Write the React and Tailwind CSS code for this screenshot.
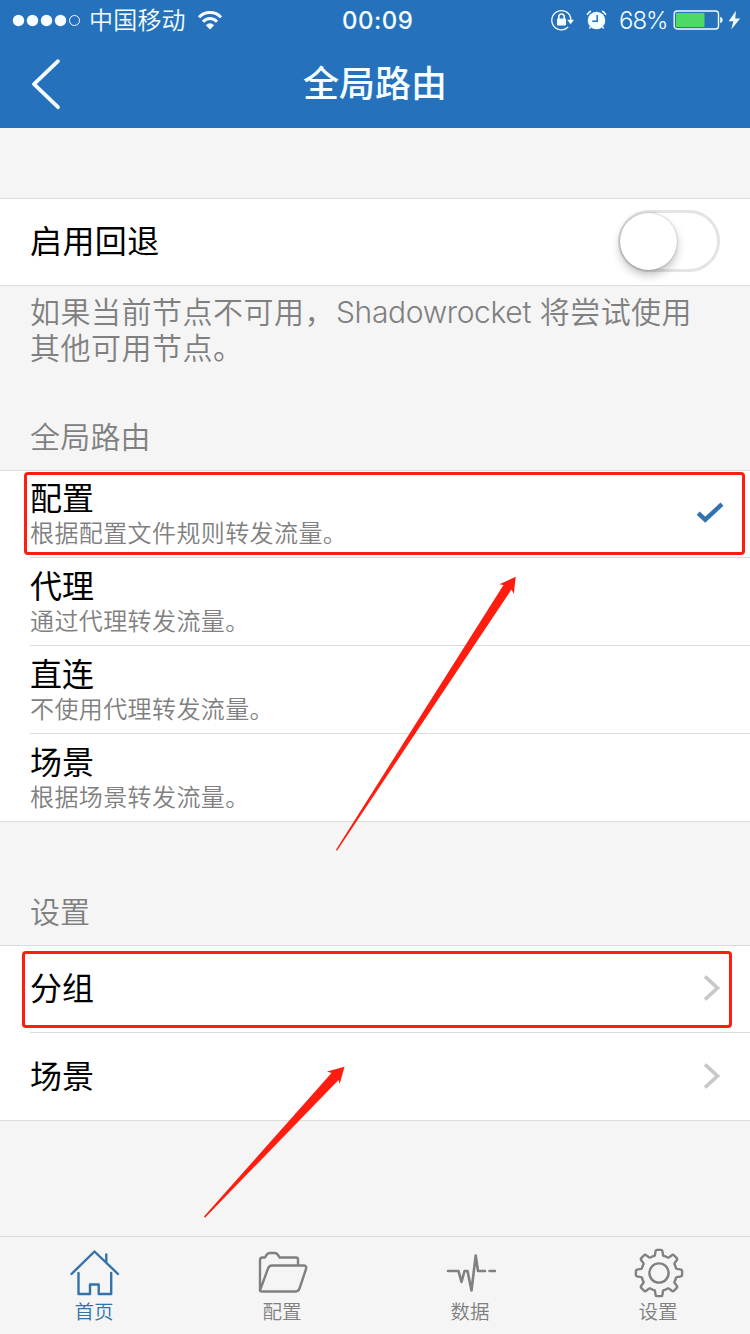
import React from "react";

const FONT = "font-['Inter','Noto_Sans_CJK_SC',sans-serif]";

function StatusBar() {
  return (
    <div className="flex h-10 items-center text-[#f4fdff]">
      <svg className="ml-3 h-5 w-[70px] shrink-0" viewBox="0 0 70 20" fill="currentColor">
        <circle cx="6.5" cy="10.5" r="5.7" />
        <circle cx="20.5" cy="10.5" r="5.7" />
        <circle cx="34.5" cy="10.5" r="5.7" />
        <circle cx="48.5" cy="10.5" r="5.7" />
        <circle cx="62.5" cy="10.5" r="5" fill="none" stroke="currentColor" strokeWidth="1" />
      </svg>
      <span className="ml-[7px] w-[108px] whitespace-nowrap pt-0.5 text-2xl font-[350] leading-10 tracking-[0.2px]">中国移动</span>
      <svg className="ml-px h-[19px] w-6 shrink-0" viewBox="0 0 24 19" fill="none" stroke="currentColor" strokeWidth="3">
        <path d="M1 6.3C7-.2 17-.2 23 6.3" />
        <path d="M5 10.7c4-4.2 10-4.2 14 0" />
        <path d="M7.8 14.2Q12 10.4 16.2 14.2L12 18.6Z" fill="currentColor" stroke="none" />
      </svg>
      <span className="ml-[120px] w-[74px] whitespace-nowrap pt-0.5 text-2xl font-medium leading-10 tracking-[0.5px]">00:09</span>
      <svg className="ml-[134px] h-6 w-6 shrink-0" viewBox="0 0 24 24" fill="none" stroke="currentColor" strokeWidth="1.3">
        <path d="M20.6 9.5A9.6 9.6 0 1 0 18.2 19" />
        <path d="M20.8 12.2V11.5L20.4 8.6" />
        <path d="M17.2 11.8h6.8l-3.4 4.4Z" fill="currentColor" stroke="none" />
        <rect x="7" y="10.6" width="9" height="7" rx="0.8" fill="currentColor" stroke="none" />
        <path d="M8.8 11V8.7a2.7 2.7 0 0 1 5.4 0V11" strokeWidth="1.6" />
      </svg>
      <svg className="ml-3 h-6 w-6 shrink-0" viewBox="0 0 24 24" fill="none" stroke="currentColor">
        <circle cx="10.5" cy="12.5" r="8.8" fill="currentColor" stroke="none" />
        <path d="M1 6.8A12 12 0 0 1 4.9 3M16.1 3a12 12 0 0 1 3.9 3.8" strokeWidth="1.5" />
        <path d="M4.5 19l-1.2 1.5M16.5 19l1.2 1.5" strokeWidth="1.5" />
        <path d="M11.2 7v6.2H6.2" stroke="#2671bc" strokeWidth="1.5" />
      </svg>
      <span className="ml-[9px] w-[54px] whitespace-nowrap pt-0.5 text-2xl font-[350] leading-10 tracking-[-1px]">68%</span>
      <svg className="h-5 w-[68px] shrink-0" viewBox="0 0 68 20" fill="none">
        <rect x="1.2" y="1" width="44.3" height="18" rx="3" stroke="#f4fdff" strokeWidth="1.4" />
        <path d="M3.5 3H31.5v14H3.5Q3 17 3 16.5v-13Q3 3 3.5 3Z" fill="#4cd964" />
        <path d="M47.2 6.7q2.5 1 2.5 3.3t-2.5 3.3Z" fill="#f4fdff" />
        <path d="M63 .8 55.7 11.3h4.7L58.200 19.6l9-11.200h-5Z" fill="#f4fdff" />
      </svg>
    </div>
  );
}

function NavBar() {
  return (
    <header className="h-32 bg-[#2671bc]">
      <StatusBar />
      <div className="grid h-[88px] grid-cols-[200px_1fr_200px] items-center">
        <svg className="ml-7 h-[56px] w-9" viewBox="0 0 36 56" fill="none" stroke="#f4fdff" strokeWidth="3.8" strokeLinecap="round" strokeLinejoin="round">
          <path d="M30 5.2 6 28.2l24 23" />
        </svg>
        <h1 className="text-center text-4xl font-medium leading-[88px] text-[#f4fdff]">全局路由</h1>
      </div>
    </header>
  );
}

function RouteRow({ title, detail, checked, last }) {
  return (
    <div className={last ? "flex h-[87px] items-center" : "flex h-[88px] items-center"}>
      <div className={last ? "ml-[30px] h-full flex-1" : "ml-[30px] h-full flex-1 border-b border-[#dcdcdc]"}>
        <div className="flex h-full items-center justify-between pr-[26px]">
          <div className="pt-[3px]">
            <div className="text-[32px] leading-9 text-black">{title}</div>
            <div className="h-8 pt-px text-2xl font-[350] leading-8 tracking-[0.4px] text-[#808080]">{detail}</div>
          </div>
          {checked && (
            <svg className="mb-0.5 h-6 w-[28px]" viewBox="0 0 28 24" fill="none" stroke="#3472ad" strokeWidth="4.4">
              <path d="M2.2 12.2 9.2 18.7 26 3.2" />
            </svg>
          )}
        </div>
      </div>
    </div>
  );
}

function LinkRow({ title, last }) {
  return (
    <div className="h-[87px] pl-[30px]">
      <div className={last ? "flex h-full items-center justify-between pr-7" : "flex h-full items-center justify-between border-b border-[#dcdcdc] pr-7"}>
        <span className="text-[32px] leading-[86px] text-black">{title}</span>
        <svg className="mb-0.5 h-7 w-5" viewBox="0 0 20 28" fill="none" stroke="#c7c7cb" strokeWidth="3.6">
          <path d="M3 2.5 15.5 14 3 25.5" />
        </svg>
      </div>
    </div>
  );
}

const gearPoint = (deg, r) => {
  const a = (deg * Math.PI) / 180;
  return `${(25 + r * Math.sin(a)).toFixed(2)} ${(25 - r * Math.cos(a)).toFixed(2)}`;
};

const GEAR_PATH =
  Array.from({ length: 8 }, (_, i) => {
    const c = i * 45;
    return `${i ? "L" : "M"}${gearPoint(c - 19, 17.8)}Q${gearPoint(c - 13, 17.2)} ${gearPoint(c - 11.5, 19.5)}L${gearPoint(c - 9.5, 21.6)}Q${gearPoint(c - 8.5, 23.2)} ${gearPoint(c - 5, 23.2)}L${gearPoint(c + 5, 23.2)}Q${gearPoint(c + 8.5, 23.2)} ${gearPoint(c + 9.5, 21.6)}L${gearPoint(c + 11.5, 19.5)}Q${gearPoint(c + 13, 17.2)} ${gearPoint(c + 19, 17.8)}`;
  }).join("") + "Z";

function HomeIcon() {
  return (
    <path d="M1.5 26 24.5 3.5l23.5 22.5M36.3 6.5v8M8.5 25v21H20V36.5h8.7V46h12.5V25" />
  );
}

function FolderIcon() {
  return (
    <path d="M2 42.500V12q0-2 2-2.500H7q2-4.500 5-4.500H16.500q3 0 5 4.500H38q2 0 2 2V17.500M2 42.500 10 20.500q1-3 4-3H45.500q3.500 0 2.500 3.500L41.500 40.500q-1 3-4.500 3H4.500Q2 43.500 2 42.500" />
  );
}

function PulseIcon() {
  return (
    <path d="M2 23H12.500L15.500 34 18.500 23H21.500L25.500 42.500 29.700 7.500 32 23H39M43.500 23H49" strokeWidth="2.6" />
  );
}

function GearIcon() {
  return (
    <>
      <path d={GEAR_PATH} />
      <circle cx="25" cy="25" r="9.6" />
    </>
  );
}

function Tab({ label, active, children }) {
  return (
    <div className={active ? "flex w-[188px] shrink-0 flex-col items-center text-[#3472a8]" : "flex w-[188px] shrink-0 flex-col items-center text-[#808080]"}>
      <svg className="ml-px mt-[11px] h-[50px] w-[50px]" viewBox="0 0 50 50" fill="none" stroke="currentColor" strokeWidth="2.4" strokeLinecap="round" strokeLinejoin="round">
        {children}
      </svg>
      <span className="-mt-px h-[30px] text-[19.5px] font-[350] leading-[30px]">{label}</span>
    </div>
  );
}

function Annotations() {
  return (
    <>
      <div className="absolute left-6 top-[472px] h-[83px] w-[721px] rounded border-[3px] border-[#ff1d10]" />
      <div className="absolute left-[22px] top-[951px] h-[77px] w-[710px] rounded border-[3px] border-[#ff1d10]" />
      <svg className="absolute left-0 top-0 h-[1334px] w-[750px]" viewBox="0 0 750 1334" fill="#ff1d10">
        <path d="M336 849.7 503.5 585 499.3 584.3 515.7 576.8 513.8 594 511.5 589.5 337 850.8Z" />
        <path d="M204 1216.5 331.5 1073 327 1071.5 344.5 1066.7 339.7 1084 338.5 1080 205 1217.7Z" />
      </svg>
    </>
  );
}

export default function App() {
  return (
    <div className={`relative flex h-[1334px] w-[750px] flex-col overflow-hidden bg-[#f5f5f5] ${FONT}`}>
      <NavBar />
      <main className="flex-1 pt-[70px]">
        <section className="flex h-[88px] items-center justify-between border-y border-[#dcdcdc] bg-white px-[30px]">
          <span className="text-[32px] leading-[86px] tracking-[0.4px] text-black">启用回退</span>
          <div className="mb-0.5 flex h-[62px] w-[102px] items-center rounded-full border-[3px] border-[#e4e4e4] bg-white">
            <div className="-ml-px h-[57px] w-[57px] rounded-full bg-white shadow-[0_5px_10px_rgba(0,0,0,0.25),0_0_2px_rgba(0,0,0,0.3)]" />
          </div>
        </section>
        <p className="h-[130px] whitespace-nowrap pl-[30px] pt-2 text-[30px] font-[350] leading-9 tracking-[0.5px] text-[#808080]">
          如果当前节点不可用，<span className="ml-px tracking-[-0.35px]">Shadowrocket</span><span className="tracking-[0.4px]"> 将尝试使用</span>
          <br />
          其他可用节点。
        </p>
        <h2 className="h-[54px] pl-[30px] text-[30px] font-[350] leading-[42px] tracking-[0.2px] text-[#808080]">全局路由</h2>
        <section className="h-[352px] border-y border-[#dcdcdc] bg-white">
          <div className="-mt-px">
            <RouteRow title="配置" detail="根据配置文件规则转发流量。" checked />
            <RouteRow title="代理" detail="通过代理转发流量。" />
            <RouteRow title="直连" detail="不使用代理转发流量。" />
            <RouteRow title="场景" detail="根据场景转发流量。" last />
          </div>
        </section>
        <h2 className="h-[123px] pl-[30px] pt-[69px] text-[30px] font-[350] leading-[42px] text-[#808080]">设置</h2>
        <section className="h-[176px] border-y border-[#dcdcdc] bg-white">
          <LinkRow title="分组" />
          <LinkRow title="场景" last />
        </section>
      </main>
      <nav className="flex h-[98px] border-t border-[#dcdcdc] bg-[#f5f5f5]">
        <Tab label="首页" active><HomeIcon /></Tab>
        <Tab label="配置"><FolderIcon /></Tab>
        <Tab label="数据"><PulseIcon /></Tab>
        <Tab label="设置"><GearIcon /></Tab>
      </nav>
      <Annotations />
    </div>
  );
}
